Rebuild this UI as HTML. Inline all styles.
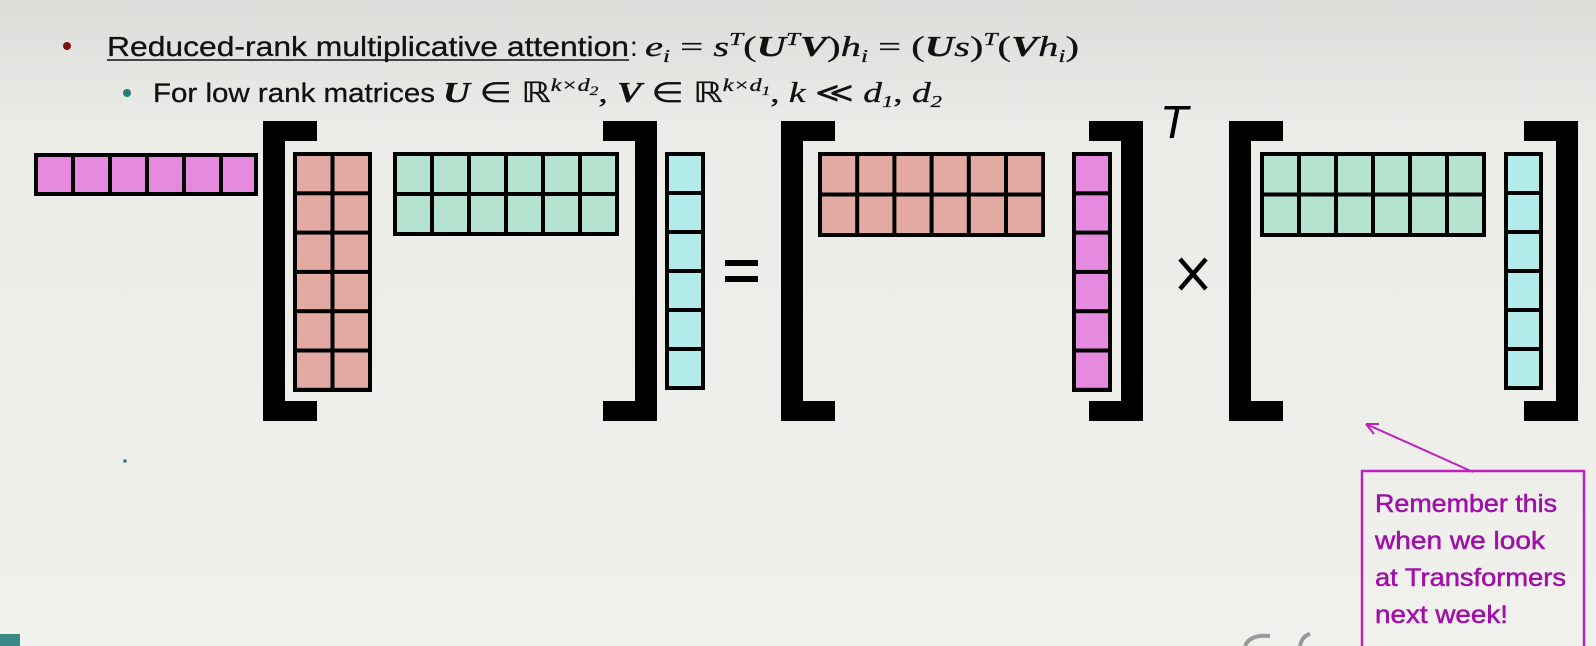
<!DOCTYPE html>
<html><head><meta charset="utf-8"><style>
html,body{margin:0;padding:0;width:1596px;height:646px;overflow:hidden;background:#efefeb}
svg{display:block}
</style></head><body>
<svg width="1596" height="646" viewBox="0 0 1596 646" xmlns="http://www.w3.org/2000/svg">
<defs><linearGradient id="bg" x1="0" y1="0" x2="0" y2="1">
<stop offset="0" stop-color="#dcdcd9"/><stop offset="0.2" stop-color="#ebebe8"/><stop offset="1" stop-color="#f0f0ec"/></linearGradient></defs>
<rect width="1596" height="646" fill="url(#bg)"/>

<circle cx="67" cy="46" r="4" fill="#7a1010"/>
<text x="107" y="56" font-family="Liberation Sans, sans-serif" font-size="28" fill="#111" stroke="#111" stroke-width="0.3" textLength="522" lengthAdjust="spacingAndGlyphs">Reduced-rank multiplicative attention</text>
<line x1="107" y1="60" x2="629" y2="60" stroke="#111" stroke-width="1.5"/>
<text x="630" y="56" font-family="Liberation Sans, sans-serif" font-size="28" fill="#111">:</text>
<text x="645" y="56" font-family="Liberation Serif, serif" font-size="29" fill="#111" stroke="#111" stroke-width="0.3" font-style="italic" textLength="434" lengthAdjust="spacingAndGlyphs">e<tspan font-size="18" dy="6">i</tspan><tspan dy="-6" font-style="normal"> = </tspan>s<tspan font-size="18" dy="-11">T</tspan><tspan dy="11" font-style="normal">(</tspan><tspan font-weight="bold">U</tspan><tspan font-size="18" dy="-11">T</tspan><tspan dy="11" font-weight="bold">V</tspan><tspan font-style="normal">)</tspan>h<tspan font-size="18" dy="6">i</tspan><tspan dy="-6" font-style="normal"> = (</tspan><tspan font-weight="bold">U</tspan>s<tspan font-style="normal">)</tspan><tspan font-size="18" dy="-11">T</tspan><tspan dy="11" font-style="normal">(</tspan><tspan font-weight="bold">V</tspan>h<tspan font-size="18" dy="6">i</tspan><tspan dy="-6" font-style="normal">)</tspan></text>

<circle cx="127" cy="93" r="4" fill="#2a7a7a"/>
<text x="153" y="102" font-family="Liberation Sans, sans-serif" font-size="27" fill="#111" stroke="#111" stroke-width="0.3" textLength="282" lengthAdjust="spacingAndGlyphs">For low rank matrices</text>
<text x="443" y="102" font-family="Liberation Serif, serif" font-size="28" fill="#111" stroke="#111" stroke-width="0.3" font-style="italic" textLength="499" lengthAdjust="spacingAndGlyphs"><tspan font-weight="bold">U</tspan><tspan font-style="normal"> ∈ ℝ</tspan><tspan font-size="18" dy="-11">k×d</tspan><tspan font-size="13" dy="4">2</tspan><tspan dy="7" font-style="normal">, </tspan><tspan font-weight="bold">V</tspan><tspan font-style="normal"> ∈ ℝ</tspan><tspan font-size="18" dy="-11">k×d</tspan><tspan font-size="13" dy="4">1</tspan><tspan dy="7" font-style="normal">, </tspan>k<tspan font-style="normal"> ≪ </tspan>d<tspan font-size="17" dy="5">1</tspan><tspan dy="-5" font-style="normal">, </tspan>d<tspan font-size="17" dy="5">2</tspan></text>

<g>
<rect x="34" y="153" width="224" height="43" fill="#000"/>
<g fill="#e68ae0">
<rect x="38" y="157" width="33" height="35"/><rect x="75" y="157" width="33" height="35"/><rect x="112" y="157" width="33" height="35"/><rect x="149" y="157" width="33" height="35"/><rect x="186" y="157" width="33" height="35"/><rect x="223" y="157" width="31" height="35"/>
</g></g>

<g fill="#000">
<path d="M263 121h54v20h-32v260h32v20h-54z"/>
<path d="M657 121h-54v20h32v260h-32v20h54z"/>
<path d="M781 121h54v20h-32v260h32v20h-54z"/>
<path d="M1143 121h-54v20h32v260h-32v20h54z"/>
<path d="M1229 121h54v20h-32v260h32v20h-54z"/>
<path d="M1578 121h-54v20h32v260h-32v20h54z"/>
</g>

<rect x="293" y="152" width="79" height="240" fill="#000"/>
<rect x="393" y="152" width="226" height="84" fill="#000"/>
<rect x="665" y="152" width="40" height="238" fill="#000"/>
<rect x="818" y="152" width="227" height="85" fill="#000"/>
<rect x="1072" y="152" width="40" height="240" fill="#000"/>
<rect x="1260" y="152" width="226" height="85" fill="#000"/>
<rect x="1504" y="152" width="39" height="238" fill="#000"/>

<g fill="#e3aaa4">
<rect x="297" y="156" width="33.5" height="35.3"/><rect x="334.5" y="156" width="33.5" height="35.3"/>
<rect x="297" y="195.3" width="33.5" height="35.3"/><rect x="334.5" y="195.3" width="33.5" height="35.3"/>
<rect x="297" y="234.6" width="33.5" height="35.3"/><rect x="334.5" y="234.6" width="33.5" height="35.3"/>
<rect x="297" y="273.9" width="33.5" height="35.3"/><rect x="334.5" y="273.9" width="33.5" height="35.3"/>
<rect x="297" y="313.2" width="33.5" height="35.3"/><rect x="334.5" y="313.2" width="33.5" height="35.3"/>
<rect x="297" y="352.5" width="33.5" height="35.3"/><rect x="334.5" y="352.5" width="33.5" height="35.3"/>
<rect x="822" y="156" width="33.2" height="36.5"/><rect x="859.2" y="156" width="33.2" height="36.5"/><rect x="896.4" y="156" width="33.2" height="36.5"/><rect x="933.6" y="156" width="33.2" height="36.5"/><rect x="970.8" y="156" width="33.2" height="36.5"/><rect x="1008" y="156" width="33.2" height="36.5"/>
<rect x="822" y="196.5" width="33.2" height="36.5"/><rect x="859.2" y="196.5" width="33.2" height="36.5"/><rect x="896.4" y="196.5" width="33.2" height="36.5"/><rect x="933.6" y="196.5" width="33.2" height="36.5"/><rect x="970.8" y="196.5" width="33.2" height="36.5"/><rect x="1008" y="196.5" width="33.2" height="36.5"/>
</g>
<g fill="#b4e4d0">
<rect x="397" y="156" width="33" height="36"/><rect x="434" y="156" width="33" height="36"/><rect x="471" y="156" width="33" height="36"/><rect x="508" y="156" width="33" height="36"/><rect x="545" y="156" width="33" height="36"/><rect x="582" y="156" width="33" height="36"/>
<rect x="397" y="196" width="33" height="36"/><rect x="434" y="196" width="33" height="36"/><rect x="471" y="196" width="33" height="36"/><rect x="508" y="196" width="33" height="36"/><rect x="545" y="196" width="33" height="36"/><rect x="582" y="196" width="33" height="36"/>
<rect x="1264" y="156" width="33" height="36.5"/><rect x="1301" y="156" width="33" height="36.5"/><rect x="1338" y="156" width="33" height="36.5"/><rect x="1375" y="156" width="33" height="36.5"/><rect x="1412" y="156" width="33" height="36.5"/><rect x="1449" y="156" width="33" height="36.5"/>
<rect x="1264" y="196.5" width="33" height="36.5"/><rect x="1301" y="196.5" width="33" height="36.5"/><rect x="1338" y="196.5" width="33" height="36.5"/><rect x="1375" y="196.5" width="33" height="36.5"/><rect x="1412" y="196.5" width="33" height="36.5"/><rect x="1449" y="196.5" width="33" height="36.5"/>
</g>
<g fill="#b2ebe9">
<rect x="669" y="156" width="32" height="35"/><rect x="669" y="195" width="32" height="35"/><rect x="669" y="234" width="32" height="35"/><rect x="669" y="273" width="32" height="35"/><rect x="669" y="312" width="32" height="35"/><rect x="669" y="351" width="32" height="35"/>
<rect x="1508" y="156" width="31" height="35"/><rect x="1508" y="195" width="31" height="35"/><rect x="1508" y="234" width="31" height="35"/><rect x="1508" y="273" width="31" height="35"/><rect x="1508" y="312" width="31" height="35"/><rect x="1508" y="351" width="31" height="35"/>
</g>
<g fill="#e68ae0">
<rect x="1076" y="156" width="32" height="35.3"/><rect x="1076" y="195.3" width="32" height="35.3"/><rect x="1076" y="234.6" width="32" height="35.3"/><rect x="1076" y="273.9" width="32" height="35.3"/><rect x="1076" y="313.2" width="32" height="35.3"/><rect x="1076" y="352.5" width="32" height="35.3"/>
</g>

<rect x="725" y="260" width="33" height="6" fill="#000"/>
<rect x="725" y="276" width="33" height="6" fill="#000"/>
<path d="M1180 259L1206 289M1206 259L1180 289" stroke="#000" stroke-width="4.5"/>
<text x="1160" y="138" font-family="Liberation Sans, sans-serif" font-style="italic" font-size="46" fill="#000">T</text>

<circle cx="125" cy="461" r="1.8" fill="#2a7a7a"/>

<path d="M1473 472L1366 424M1366 424l13 0M1366 424l8 10" stroke="#c020c0" stroke-width="2" fill="none"/>
<rect x="1362" y="471" width="222" height="190" fill="none" stroke="#c020c0" stroke-width="2.5"/>
<g font-family="Liberation Sans, sans-serif" font-size="25" fill="#a010a8" stroke="#a010a8" stroke-width="0.5">
<text x="1375" y="512" textLength="182" lengthAdjust="spacingAndGlyphs">Remember this</text>
<text x="1375" y="549" textLength="170" lengthAdjust="spacingAndGlyphs">when we look</text>
<text x="1375" y="586" textLength="191" lengthAdjust="spacingAndGlyphs">at Transformers</text>
<text x="1375" y="623" textLength="133" lengthAdjust="spacingAndGlyphs">next week!</text>
</g>
<rect x="0" y="634" width="20" height="12" fill="#3a8a8a"/>
<path d="M1245 646q5-12 25-10M1300 646q2-10 10-12" stroke="#999" stroke-width="4" fill="none"/>
</svg>
</body></html>
